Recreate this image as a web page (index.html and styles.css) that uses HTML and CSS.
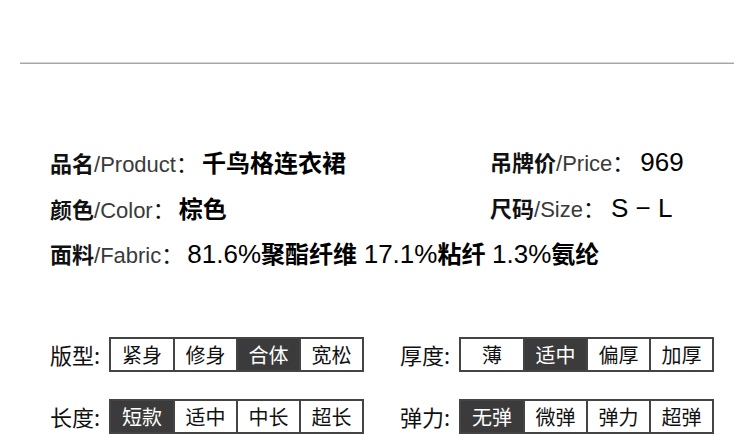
FILE: index.html
```html
<!DOCTYPE html>
<html lang="zh-CN">
<head>
    <meta charset="UTF-8">
    <title>商品信息</title>
    <link rel="stylesheet" href="styles.css">
</head>
<body>
    <div class="rule"></div>

    <div class="info">
        <div class="info-row">
            <div class="info-item info-left"><b>品名</b><span class="en">/Product</span>：<span class="val"><b>千鸟格连衣裙</b></span></div>
            <div class="info-item"><b>吊牌价</b><span class="en">/Price</span>：<span class="num">969</span></div>
        </div>
        <div class="info-row">
            <div class="info-item info-left"><b>颜色</b><span class="en">/Color</span>：<span class="val"><b>棕色</b></span></div>
            <div class="info-item"><b>尺码</b><span class="en">/Size</span>：<span class="num">S − L</span></div>
        </div>
        <div class="info-row">
            <div class="info-item"><b>面料</b><span class="en">/Fabric</span>：<span class="val"><span class="pct">81.6%</span><b>聚酯纤维</b> <span class="pct">17.1%</span><b>粘纤</b> <span class="pct">1.3%</span><b>氨纶</b></span></div>
        </div>
    </div>

    <div class="specs">
        <div class="spec-row">
            <div class="spec">
                <span class="spec-label">版型:</span>
                <div class="scale">
                    <span class="cell">紧身</span>
                    <span class="cell">修身</span>
                    <span class="cell on">合体</span>
                    <span class="cell">宽松</span>
                </div>
            </div>
            <div class="spec">
                <span class="spec-label">厚度:</span>
                <div class="scale">
                    <span class="cell">薄</span>
                    <span class="cell on">适中</span>
                    <span class="cell">偏厚</span>
                    <span class="cell">加厚</span>
                </div>
            </div>
        </div>
        <div class="spec-row">
            <div class="spec">
                <span class="spec-label">长度:</span>
                <div class="scale">
                    <span class="cell on">短款</span>
                    <span class="cell">适中</span>
                    <span class="cell">中长</span>
                    <span class="cell">超长</span>
                </div>
            </div>
            <div class="spec">
                <span class="spec-label">弹力:</span>
                <div class="scale">
                    <span class="cell on">无弹</span>
                    <span class="cell">微弹</span>
                    <span class="cell">弹力</span>
                    <span class="cell">超弹</span>
                </div>
            </div>
        </div>
    </div>
</body>
</html>
```

FILE: styles.css
```css
body {
    margin: 0;
    background: #fff;
    color: #111;
    font-family: "Liberation Sans", "Noto Sans CJK SC", sans-serif;
}
.rule {
    margin: 62px 16px 0 20px;
    height: 0;
    border-top: 1px solid #d6d6d6;
    border-bottom: 1px solid #a6a6a6;
}
.info {
    padding: 75px 0 0 50px;
    font-size: 22px;
}
.info-row {
    display: flex;
    height: 45.5px;
    line-height: 45.5px;
}
.info-item {
    white-space: nowrap;
}
.info-left {
    width: 440px;
}
.info b {
    font-family: "Noto Sans CJK SC", sans-serif;
    font-weight: 700;
}
.info .en {
    color: #3a3a3a;
}
.info .val {
    margin-left: 4px;
    font-size: 24px;
    color: #000;
}
.info .pct {
    font-size: 26px;
}
.info .num {
    margin-left: 6px;
    font-size: 26px;
    color: #000;
}
.specs {
    padding: 61px 0 0 50px;
}
.spec-row {
    display: flex;
    margin-bottom: 27px;
}
.spec {
    display: flex;
    align-items: center;
    width: 350px;
}
.spec-label {
    width: 59px;
    font-family: "Noto Sans CJK SC", sans-serif;
    font-size: 22px;
    color: #111;
}
.scale {
    display: flex;
    border: 1px solid #444;
}
.cell {
    box-sizing: border-box;
    width: 64px;
    height: 33px;
    line-height: 31px;
    border: 1px solid #444;
    text-align: center;
    font-family: "Noto Sans CJK SC", sans-serif;
    font-size: 20px;
    color: #111;
}
.cell + .cell {
    margin-left: -1px;
    border-left-width: 2px;
}
.cell.on {
    background: #3b3b3b;
    color: #fff;
}
```
